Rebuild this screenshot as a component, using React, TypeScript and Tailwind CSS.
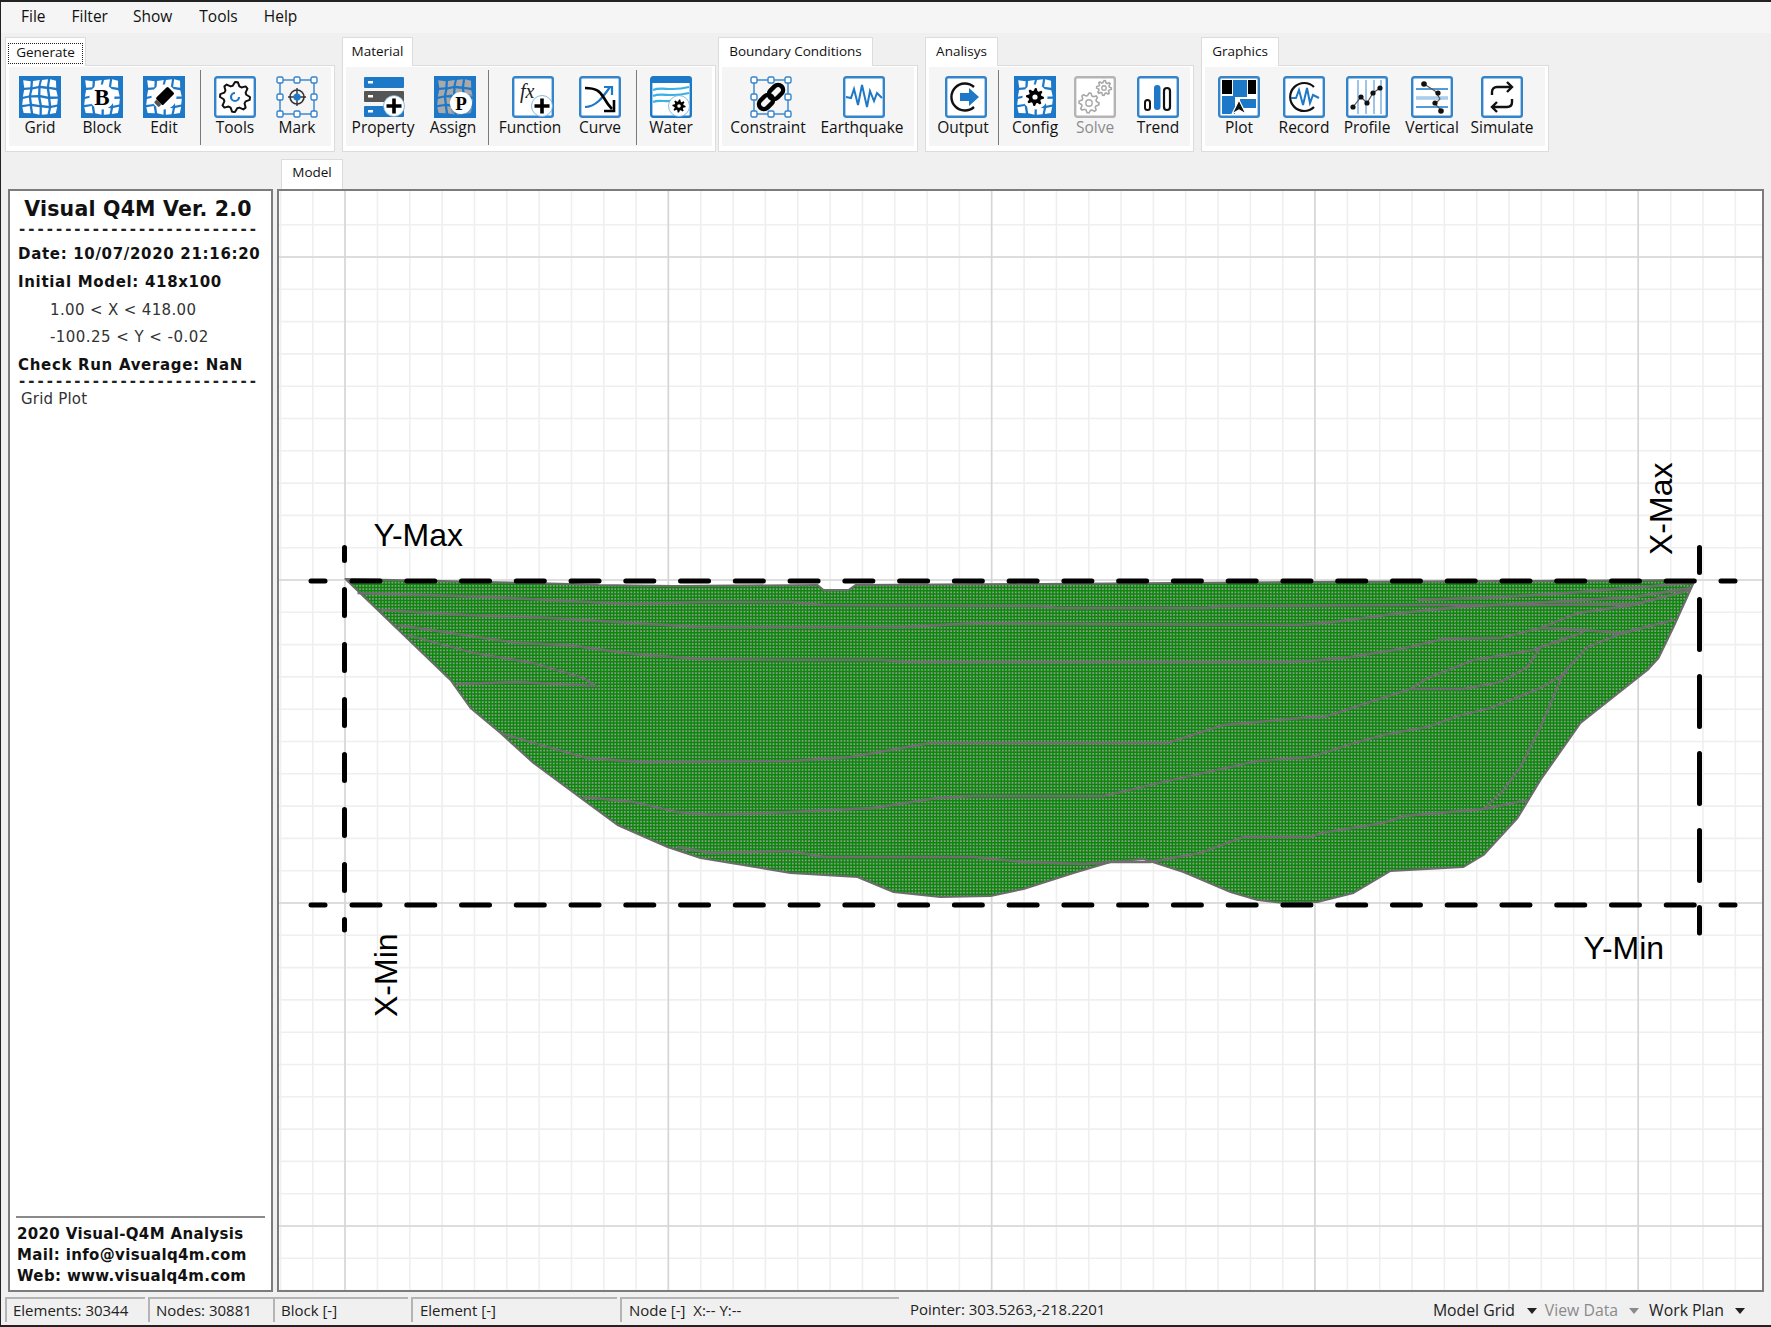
import React from 'react';

const BLUE = '#1e78c8';

const gearPath = (cx: number, cy: number, ro: number, ri: number, teeth: number) => {
  const pts: string[] = [];
  const n = teeth * 4;
  for (let i = 0; i < n; i++) {
    const a = (i / n) * Math.PI * 2;
    const r = i % 4 < 2 ? ro : ri;
    pts.push(`${(cx + r * Math.cos(a)).toFixed(2)},${(cy + r * Math.sin(a)).toFixed(2)}`);
  }
  return pts.join(' ');
};

const Svg = ({ children }: { children: React.ReactNode }) => (
  <svg viewBox="0 0 42 42" className="w-[42px] h-[42px] shrink-0">
    {children}
  </svg>
);

const Frame = ({ children, color = '#3484cc' }: { children?: React.ReactNode; color?: string }) => (
  <Svg>
    <rect x="1.2" y="1.2" width="39.6" height="39.6" rx="2" fill="#fff" stroke={color} strokeWidth="2.4" />
    {children}
  </Svg>
);

const Mesh = ({ cell = '#fff', children }: { cell?: string; children?: React.ReactNode }) => {
  const v = (i: number, j: number) => [
    3 + 9 * i + 1.3 * Math.sin(j * 1.7 + i),
    3 + 9 * j + 1.3 * Math.sin(i * 1.7 + j),
  ];
  const cells: string[] = [];
  for (let i = 0; i < 4; i++) {
    for (let j = 0; j < 4; j++) {
      const c = [v(i, j), v(i + 1, j), v(i + 1, j + 1), v(i, j + 1)];
      const mx = (c[0][0] + c[2][0]) / 2;
      const my = (c[0][1] + c[2][1]) / 2;
      cells.push(c.map((p) => `${(mx + (p[0] - mx) * 0.74).toFixed(1)},${(my + (p[1] - my) * 0.74).toFixed(1)}`).join(' '));
    }
  }
  return (
    <Svg>
      <rect width="42" height="42" fill={BLUE} />
      {cells.map((p) => (
        <polygon key={p} points={p} fill={cell} />
      ))}
      {children}
    </Svg>
  );
};

const Badge = () => (
  <g>
    <circle cx="30" cy="30" r="10.5" fill="#fff" stroke="#6aa8dc" strokeWidth="0.8" />
    <path d="M30 22.5V37.5M22.5 30H37.5" stroke="#000" strokeWidth="3.6" />
  </g>
);

const Selection = ({ children }: { children: React.ReactNode }) => {
  const hs = [[4, 4], [21, 4], [38, 4], [4, 21], [38, 21], [4, 38], [21, 38], [38, 38]];
  return (
    <Svg>
      <rect x="4" y="4" width="34" height="34" fill="none" stroke="#3484cc" strokeWidth="1.4" />
      {hs.map(([x, y]) => (
        <rect key={`${x}-${y}`} x={x - 3} y={y - 3} width="6" height="6" rx="1.5" fill="#fff" stroke="#3484cc" strokeWidth="1.4" />
      ))}
      {children}
    </Svg>
  );
};

const IconGrid = () => <Mesh />;
const IconBlock = () => (
  <Mesh>
    <circle cx="21" cy="21" r="12.5" fill="#fff" />
    <text x="21" y="29" textAnchor="middle" fontSize="23" fontWeight="700" className="font-['Liberation_Serif',serif]">B</text>
  </Mesh>
);
const IconEdit = () => (
  <Mesh>
    <circle cx="21" cy="21" r="12.5" fill="#fff" />
    <g transform="rotate(-45 21 21)">
      <rect x="14" y="16" width="17" height="10" rx="1.5" fill="#000" />
      <rect x="10" y="17.5" width="4" height="7" rx="1.5" fill="#555" />
    </g>
  </Mesh>
);
const IconTools = () => (
  <Frame>
    <polygon points={gearPath(21, 21, 15, 11.5, 8)} fill="none" stroke="#111" strokeWidth="2" strokeLinejoin="round" />
    <path d="M25 21A4 4 0 1 1 21 17" fill="none" stroke={BLUE} strokeWidth="2.2" />
  </Frame>
);
const IconMark = () => (
  <Selection>
    <circle cx="21" cy="21" r="7" fill="none" stroke="#333" strokeWidth="1.6" />
    <path d="M21 12V30M12 21H30" stroke="#333" strokeWidth="1.4" />
    <circle cx="21" cy="21" r="3.6" fill={BLUE} />
  </Selection>
);
const IconProperty = () => (
  <Svg>
    <rect x="0" y="1" width="40" height="11" rx="1" fill={BLUE} />
    <rect x="0" y="15" width="40" height="11" rx="1" fill="#555" />
    <rect x="0" y="30" width="40" height="11" rx="1" fill={BLUE} />
    <rect x="4" y="5" width="5" height="2.5" fill="#fff" />
    <rect x="4" y="19" width="5" height="2.5" fill="#fff" />
    <rect x="4" y="34" width="5" height="2.5" fill="#fff" />
    <Badge />
  </Svg>
);
const IconAssign = () => (
  <Mesh cell="#a9a9a9">
    <path d="M15 18L40 18V40H18Z" fill={BLUE} opacity="0.35" />
    <circle cx="27" cy="27" r="11" fill="#fff" />
    <text x="27" y="34" textAnchor="middle" fontSize="19" fontWeight="700" className="font-['Liberation_Serif',serif]">P</text>
  </Mesh>
);
const IconFunction = () => (
  <Frame>
    <text x="8" y="22" fontSize="20" fontStyle="italic" fill="#222" className="font-['Liberation_Serif',serif]">fx</text>
    <Badge />
  </Frame>
);
const IconCurve = () => (
  <Frame>
    <path d="M6 31C17 31 24 21 31 11" fill="none" stroke={BLUE} strokeWidth="2.2" />
    <path d="M25 11H33V19" fill="none" stroke={BLUE} strokeWidth="2.2" />
    <path d="M6 12C17 12 21 15 25 22S30 30 33 33" fill="none" stroke="#000" strokeWidth="2.6" />
    <path d="M35 24V35H25" fill="none" stroke="#000" strokeWidth="2.6" />
  </Frame>
);
const IconWater = () => (
  <Frame color={BLUE}>
    <rect x="2" y="2" width="38" height="5" fill={BLUE} />
    <path d="M3 14C12 10 20 16 39 11M3 20C12 16 20 22 39 17M3 26C10 23 16 27 26 24" fill="none" stroke="#38b0e8" strokeWidth="2.2" />
    <circle cx="29" cy="30" r="10.5" fill="#fff" stroke="#6aa8dc" strokeWidth="0.8" />
    <polygon points={gearPath(29, 30, 6.6, 4.6, 8)} fill="#000" />
    <circle cx="29" cy="30" r="1.8" fill="#fff" />
  </Frame>
);
const IconConstraint = () => (
  <Selection>
    <g transform="rotate(-45 21 21)" fill="none" stroke="#000" strokeWidth="4.4">
      <rect x="6" y="16" width="16" height="10" rx="5" />
      <rect x="20" y="16" width="16" height="10" rx="5" />
    </g>
  </Selection>
);
const IconEarthquake = () => (
  <Frame>
    <polyline points="3,21 8,22 11,13 15,29 19,9 24,31 27,15 31,25 34,17 39,22" fill="none" stroke={BLUE} strokeWidth="2" />
  </Frame>
);
const IconOutput = () => (
  <Frame>
    <path d="M29 11A13.5 13.5 0 1 0 29 31" fill="none" stroke="#111" strokeWidth="2.4" />
    <polygon points="15,17 24,17 24,12 34,21 24,30 24,25 15,25" fill={BLUE} />
  </Frame>
);
const IconConfig = () => (
  <Mesh>
    <circle cx="21" cy="21" r="12.5" fill="#fff" />
    <polygon points={gearPath(21, 21, 9, 6.4, 8)} fill="#000" />
    <circle cx="21" cy="21" r="2.6" fill="#fff" />
  </Mesh>
);
const IconSolve = () => (
  <Frame color="#b4b4b4">
    <polygon points={gearPath(15, 27, 10, 7.6, 8)} fill="none" stroke="#a8a8a8" strokeWidth="1.6" />
    <circle cx="15" cy="27" r="3.2" fill="none" stroke="#a8a8a8" strokeWidth="1.4" />
    <polygon points={gearPath(30, 12, 7.4, 5.4, 8)} fill="none" stroke="#a8a8a8" strokeWidth="1.6" />
    <circle cx="30" cy="12" r="2.2" fill="none" stroke="#a8a8a8" strokeWidth="1.4" />
  </Frame>
);
const IconTrend = () => (
  <Frame>
    <rect x="8" y="24" width="5" height="10" rx="2.5" fill="#fff" stroke="#111" strokeWidth="2" />
    <rect x="17" y="9" width="6.5" height="25" rx="3.2" fill={BLUE} />
    <rect x="27" y="12" width="6" height="22" rx="3" fill="#fff" stroke="#111" strokeWidth="2.2" />
  </Frame>
);
const IconPlot = () => (
  <Frame>
    <rect x="4" y="4" width="10" height="14" fill="#000" />
    <rect x="15" y="4" width="14" height="17" fill={BLUE} />
    <rect x="30" y="4" width="8" height="14" fill="#000" />
    <rect x="4" y="20" width="13" height="18" fill={BLUE} />
    <rect x="22" y="23" width="16" height="9" fill={BLUE} />
    <polygon points="21,24 28,38 21,34 14,38" fill="#111" stroke="#fff" strokeWidth="1.2" />
  </Frame>
);
const IconRecord = () => (
  <Frame>
    <path d="M31 11A14 14 0 1 0 31 31" fill="none" stroke="#111" strokeWidth="2.2" />
    <polyline points="8,22 13,22 16,14 20,29 24,12 27,27 30,19 36,22" fill="none" stroke={BLUE} strokeWidth="2" />
  </Frame>
);
const IconProfile = () => (
  <Frame>
    <path d="M12 4V38M20 4V38M28 4V38M35 4V38" stroke="#7fb2e0" strokeWidth="1.5" />
    <polyline points="7,31 15,21 21,27 27,17 34,12" fill="none" stroke="#555" strokeWidth="1.2" />
    <circle cx="7" cy="31" r="2.6" fill="#111" />
    <circle cx="15" cy="21" r="2.6" fill="#111" />
    <circle cx="21" cy="27" r="2.6" fill="#111" />
    <circle cx="27" cy="17" r="2.6" fill="#111" />
    <circle cx="34" cy="12" r="2.6" fill="#111" />
  </Frame>
);
const IconVertical = () => (
  <Frame>
    <path d="M5 13H37M5 31H37" stroke={BLUE} strokeWidth="1.5" />
    <path d="M5 22H37" stroke="#a9cdec" strokeWidth="3.6" />
    <polyline points="13,8 24,15 29,23 24,28 31,35" fill="none" stroke="#555" strokeWidth="1.1" />
    <circle cx="13" cy="8" r="2.8" fill="#111" />
    <circle cx="27" cy="17" r="2.6" fill="#111" />
    <circle cx="24" cy="27" r="2.6" fill="#111" />
    <circle cx="30" cy="35" r="2.8" fill="#111" />
  </Frame>
);
const IconSimulate = () => (
  <Frame>
    <path d="M11 19V16C11 13 13 11 16 11H31M26 6L31 11L26 16" fill="none" stroke="#111" strokeWidth="2.4" />
    <path d="M31 23V26C31 29 29 31 26 31H11M16 26L11 31L16 36" fill="none" stroke="#111" strokeWidth="2.4" />
  </Frame>
);

const Tool = ({ label, className = '', labelClass = '', disabled, children }: { label: string; className?: string; labelClass?: string; disabled?: boolean; children: React.ReactNode }) => (
  <div className={`w-[60px] shrink-0 flex flex-col items-center ${className}`}>
    {children}
    <span className={`h-[20px] -mt-px leading-[20px] text-[15.5px] whitespace-nowrap ${disabled ? 'text-[#8c8c8c]' : 'text-[#111]'} ${labelClass}`}>{label}</span>
  </div>
);

const Sep = ({ className = '' }: { className?: string }) => <div className={`w-px h-[75px] -mt-[6px] bg-[#7a7a7a] shrink-0 ${className}`} />;

const Group = ({ title, tabClass, className, focus, children }: { title: string; tabClass: string; className: string; focus?: boolean; children: React.ReactNode }) => (
  <div className={`flex flex-col shrink-0 ${className}`}>
    <div className={`h-[29px] -mb-px z-10 bg-white border-t border-l border-r border-[#dcdcdc] flex items-center justify-center text-[13.5px] text-[#111] ${tabClass}`}>
      {focus ? <span className="border border-dotted border-[#222] w-[75px] h-[21px] mt-[2px] leading-[16px] text-center">{title}</span> : <span className="-mt-[2px]">{title}</span>}
    </div>
    <div className="h-[87px] border border-[#dcdcdc] bg-white pt-px pl-[3px] pr-[3px]">
      <div className="h-[79px] bg-[#f5f5f5] pt-[9px] flex items-start">{children}</div>
    </div>
  </div>
);

const minorX = Array.from({ length: 47 }, (_, i) => 280 + i * 32.33);
const minorY = Array.from({ length: 35 }, (_, i) => 224.7 + i * 32.3);
const majorX = [344.5, 667.8, 991.1, 1314.4, 1637.7];
const majorY = [257, 580, 903, 1226];
const meshX = Array.from({ length: 419 }, (_, i) => 345 + i * 3.23);
const meshY = Array.from({ length: 101 }, (_, i) => 581 + i * 3.23);

const outline =
  '345,579 440,581 570,584 598,585 672,586 817,585 823,590 848,590 855,585 1040,584 1300,582 1500,581 1695,580 1693,583 1673,627 1658,658 1647,670 1580,723 1540,780 1517,818 1483,855 1463,867 1390,871 1353,893 1317,902 1283,903 1257,900 1230,892 1183,872 1143,859 1110,862 1073,873 1023,889 990,896 940,897 893,892 857,877 790,873 700,858 667,847 617,825 583,800 533,763 500,733 470,708 450,680';

const strata = [
  '357,593 490,597 567,601 633,604 700,602 790,602 823,605 1040,606 1057,608 1207,608 1220,606 1417,605 1533,605 1633,604 1683,592',
  '380,610 467,615 550,618 633,623 700,627 903,627 977,623 1100,624 1300,625 1333,622 1400,613 1460,607 1633,597 1690,588',
  '397,625 450,633 517,643 567,645 633,654 700,659 790,660 880,660 907,662 1283,662 1310,661 1350,657 1400,649 1443,639 1500,638 1540,628 1583,630 1620,633 1673,620',
  '1540,628 1577,613 1633,605 1690,590',
  '1417,600 1500,597 1567,593 1690,583',
  '407,635 473,653 533,663 583,678 595,686 517,682 455,684',
  '500,733 540,745 587,758 640,762 790,761 850,757 930,743 1167,743 1223,725 1257,722 1310,717 1323,717 1410,689 1427,678 1473,660 1533,650 1567,637',
  '1410,689 1463,689 1500,682 1527,667 1540,647 1557,642 1583,632',
  '583,797 633,802 677,812 713,815 790,812 873,808 937,798 973,796 1103,796 1167,781 1257,761 1310,757 1357,742 1387,734 1427,727 1457,716 1490,708 1540,688 1567,672',
  '677,847 710,853 790,851 823,857 973,857 1023,862 1083,864 1110,862 1150,862 1200,853 1243,837 1310,837 1320,833 1383,823 1403,816 1483,809 1527,800',
  '1483,809 1503,790 1520,767 1540,727 1563,673 1587,647 1617,635 1673,620',
];

const Canvas = () => (
  <div className="flex-1 h-full bg-white border-2 border-[#7c7c7c] overflow-hidden">
    <svg viewBox="279 191 1482 1099" className="block w-full h-full">
      <defs>
        <clipPath id="shape">
          <polygon points={outline} />
        </clipPath>
      </defs>
      {minorX.map((x) => <line key={x} x1={x} x2={x} y1="189" y2="1292" stroke="#efefef" strokeWidth="1.6" />)}
      {minorY.map((y) => <line key={y} y1={y} y2={y} x1="277" x2="1763" stroke="#efefef" strokeWidth="1.6" />)}
      {majorX.map((x) => <line key={x} x1={x} x2={x} y1="189" y2="1292" stroke="#d6d6d6" strokeWidth="1.6" />)}
      {majorY.map((y) => <line key={y} y1={y} y2={y} x1="277" x2="1763" stroke="#d6d6d6" strokeWidth="1.6" />)}

      <g clipPath="url(#shape)">
        <rect x="345" y="578" width="1352" height="330" fill="#969696" />
        {meshX.map((x) => <line key={x} x1={x} x2={x} y1="578" y2="908" stroke="#088a08" strokeWidth="1.5" />)}
        {meshY.map((y) => <line key={y} y1={y} y2={y} x1="345" x2="1697" stroke="#088a08" strokeWidth="1.5" />)}
      </g>
      <polygon points={outline} fill="none" stroke="#6b6b6b" strokeWidth="2" strokeLinejoin="round" />
      {strata.map((p) => <polyline key={p} points={p} fill="none" stroke="#6f6f6f" strokeWidth="2.3" />)}

      <g stroke="#000" strokeWidth="5" strokeLinecap="round" fill="none">
        <line x1="310.5" x2="324.5" y1="581" y2="581" />
        <line x1="351.5" x2="1734.5" y1="581" y2="581" strokeDasharray="28 26.76" />
        <line x1="310.5" x2="324.5" y1="905" y2="905" />
        <line x1="351.5" x2="1734.5" y1="905" y2="905" strokeDasharray="28 26.76" />
        <line x1="344" x2="344" y1="547.5" y2="560.5" />
        <line x1="344" x2="344" y1="589.5" y2="930" strokeDasharray="26 29" />
        <line x1="1699" x2="1699" y1="547.5" y2="572.5" />
        <line x1="1699" x2="1699" y1="599.5" y2="933" strokeDasharray="50 27" />
      </g>

      <g fontSize="32" fill="#000" className="font-['Liberation_Sans',Arial,sans-serif]">
        <text x="373" y="546">Y-Max</text>
        <text x="1583" y="959">Y-Min</text>
        <text transform="translate(1671 555) rotate(-90)">X-Max</text>
        <text transform="translate(396 1017) rotate(-90)">X-Min</text>
      </g>
    </svg>
  </div>
);

const Dashes = () => (
  <div className="h-[6px] leading-[6px] text-[15px] font-bold tracking-[3px] whitespace-nowrap ml-[9px] text-[#222]">
    {'-'.repeat(26)}
  </div>
);

const InfoPanel = () => (
  <div className="w-[265px] h-full shrink-0 ml-[7px] bg-white border-2 border-[#7c7c7c] flex flex-col text-[#111] font-['DejaVu_Sans',sans-serif]">
    <div className="h-[35px] leading-[36px] text-[20.5px] font-bold text-center tracking-[0.2px] pr-[5px] whitespace-nowrap">Visual Q4M Ver. 2.0</div>
    <Dashes />
    <div className="mt-[9px] ml-[8px] text-[15px] leading-[27.75px] whitespace-nowrap">
      <div className="font-bold tracking-[0.68px]">Date: 10/07/2020 21:16:20</div>
      <div className="font-bold tracking-[0.68px]">Initial Model: 418x100</div>
      <div className="pl-[32px] text-[#333] tracking-[0.35px]">1.00 &lt; X &lt; 418.00</div>
      <div className="pl-[32px] text-[#333] tracking-[0.45px]">-100.25 &lt; Y &lt; -0.02</div>
      <div className="font-bold tracking-[0.68px]">Check Run Average: NaN</div>
    </div>
    <div className="-mt-[2px]"><Dashes /></div>
    <div className="h-[30px] leading-[30px] text-[15px] ml-[11px] text-[#333] tracking-[0.2px]">Grid Plot</div>
    <div className="mt-auto mx-[6px] pt-[6px] pl-px border-t-2 border-[#8a8a8a] text-[15px] font-bold leading-[21px] pb-[3px] whitespace-nowrap tracking-[0.35px]">
      <div>2020 Visual-Q4M Analysis</div>
      <div>Mail: info@visualq4m.com</div>
      <div>Web: www.visualq4m.com</div>
    </div>
  </div>
);

const Caret = ({ muted }: { muted?: boolean }) => (
  <svg viewBox="0 0 10 6" className="w-[10px] h-[6px]">
    <polygon points="0,0 10,0 5,6" fill={muted ? '#8a8a8a' : '#222'} />
  </svg>
);

const Cell = ({ className, children }: { className: string; children: React.ReactNode }) => (
  <div className={`h-[25px] border-t-2 border-l-2 border-[#b4b4b4] leading-[22px] whitespace-nowrap shrink-0 ${className}`}>{children}</div>
);

export default function App() {
  return (
    <div className="w-[1771px] h-[1327px] overflow-hidden box-border bg-[#f0f0f0] border-t-2 border-l border-b-2 border-[#222] flex flex-col font-['Open_Sans',sans-serif]">
      <div className="h-[31px] pb-[2px] shrink-0 bg-[#f5f5f5] flex items-center text-[15.5px] text-[#111]">
        <span className="ml-[20px]">File</span>
        <span className="ml-[26px]">Filter</span>
        <span className="ml-[25px]">Show</span>
        <span className="ml-[27px]">Tools</span>
        <span className="ml-[26px]">Help</span>
      </div>

      <div className="h-[4px] shrink-0" />
      <div className="h-[115px] shrink-0 flex items-start pl-[4px]">
        <Group title="Generate" tabClass="w-[81px]" className="w-[330px]" focus>
          <Tool label="Grid" className="ml-px"><IconGrid /></Tool>
          <Tool label="Block" className="ml-[2px]"><IconBlock /></Tool>
          <Tool label="Edit" className="ml-[2px]"><IconEdit /></Tool>
          <Sep className="ml-[6px]" />
          <Tool label="Tools" className="ml-[4px]"><IconTools /></Tool>
          <Tool label="Mark" className="ml-[2px]"><IconMark /></Tool>
        </Group>
        <Group title="Material" tabClass="w-[71px]" className="w-[374px] ml-[7px]">
          <Tool label="Property" className="ml-[9px]" labelClass="-translate-x-[2px]"><IconProperty /></Tool>
          <Tool label="Assign" className="ml-[10px]" labelClass="-translate-x-[2px]"><IconAssign /></Tool>
          <Sep className="ml-[3px]" />
          <Tool label="Function" className="ml-[14px]" labelClass="-translate-x-[3px]"><IconFunction /></Tool>
          <Tool label="Curve" className="ml-[7px]"><IconCurve /></Tool>
          <Sep className="ml-[6px]" />
          <Tool label="Water" className="ml-[4px]"><IconWater /></Tool>
        </Group>
        <Group title="Boundary Conditions" tabClass="w-[155px]" className="w-[200px] ml-[2px]">
          <Tool label="Constraint" className="ml-[19px]" labelClass="-translate-x-[3px]"><IconConstraint /></Tool>
          <Tool label="Earthquake" className="ml-[33px]" labelClass="-translate-x-[2px]"><IconEarthquake /></Tool>
        </Group>
        <Group title="Analisys" tabClass="w-[73px]" className="w-[269px] ml-[7px]">
          <Tool label="Output" className="ml-[7px]" labelClass="-translate-x-[3px]"><IconOutput /></Tool>
          <Sep className="ml-[2px]" />
          <Tool label="Config" className="ml-[6px]"><IconConfig /></Tool>
          <Tool label="Solve" disabled><IconSolve /></Tool>
          <Tool label="Trend" className="ml-[3px]"><IconTrend /></Tool>
        </Group>
        <Group title="Graphics" tabClass="w-[78px]" className="w-[348px] ml-[7px]">
          <Tool label="Plot" className="ml-[4px]"><IconPlot /></Tool>
          <Tool label="Record" className="ml-[5px]"><IconRecord /></Tool>
          <Tool label="Profile" className="ml-[3px]"><IconProfile /></Tool>
          <Tool label="Vertical" className="ml-[5px]"><IconVertical /></Tool>
          <Tool label="Simulate" className="ml-[10px]"><IconSimulate /></Tool>
        </Group>
      </div>

      <div className="h-[37px] shrink-0 flex items-end pl-[280px]">
        <div className="w-[62px] h-[30px] pb-[4px] bg-white border-t border-l border-r border-[#dcdcdc] flex items-center justify-center text-[13.5px] text-[#111]">Model</div>
      </div>

      <div className="h-[1103px] shrink-0 flex gap-[4px] pr-[7px]">
        <InfoPanel />
        <Canvas />
      </div>

      <div className="mt-[5px] flex text-[15px] text-[#222] pl-[4px]">
        <Cell className="w-[140px] pl-[6px]">Elements: 30344</Cell>
        <Cell className="w-[125px] ml-[3px] pl-[6px]">Nodes: 30881</Cell>
        <Cell className="w-[135px] pl-[6px]">Block [-]</Cell>
        <Cell className="w-[206px] ml-[3px] pl-[7px]">Element [-]</Cell>
        <Cell className="w-[279px] ml-[3px] pl-[7px]">Node [-]&nbsp; X:-- Y:--</Cell>
        <div className="ml-[11px] leading-[24px] whitespace-nowrap">Pointer: 303.5263,-218.2201</div>
        <div className="ml-auto mr-[26px] flex items-center leading-[27px] whitespace-nowrap text-[15.8px]">
          <span>Model Grid</span>
          <span className="ml-[12px]"><Caret /></span>
          <span className="ml-[8px] text-[#8a8a8a]">View Data</span>
          <span className="ml-[11px]"><Caret muted /></span>
          <span className="ml-[10px]">Work Plan</span>
          <span className="ml-[11px]"><Caret /></span>
        </div>
      </div>
    </div>
  );
}
